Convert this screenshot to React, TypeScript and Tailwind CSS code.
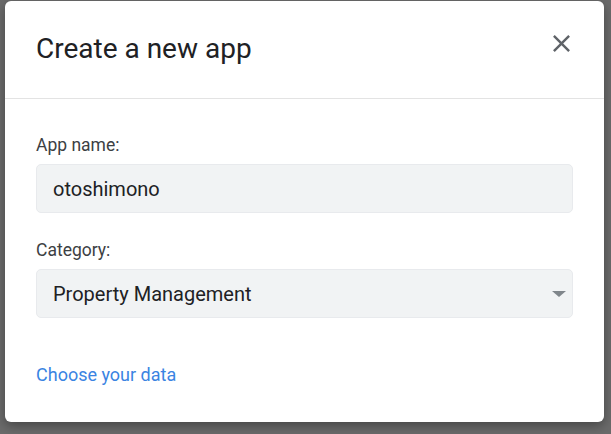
import { useState } from 'react';

const categories = ['Property Management', 'Inventory', 'Field Service', 'Sales'];

export default function App() {
  const [name, setName] = useState('otoshimono');
  const [category, setCategory] = useState(categories[0]);

  return (
    <div
      className="h-[434px] w-[611px] overflow-hidden bg-[#6b6b6b] pl-[5px] pt-[1px]"
      style={{ fontFamily: 'Roboto, "Liberation Sans", sans-serif' }}
    >
      <div className="flex h-[421px] w-[599px] flex-col rounded-[6px] bg-white shadow-[0_4px_12px_rgba(0,0,0,0.35)]">
        {/* Header */}
        <div className="flex h-[98px] shrink-0 items-start justify-between border-b border-[#e3e3e3] pl-[31px] pr-[28px]">
          <h1 className="mt-[30px] text-[28px] leading-[36px] font-normal text-[#202124]">Create a new app</h1>
          <button className="mt-[28px] text-[#5f6368]" aria-label="Close">
            <svg width="29" height="29" viewBox="0 0 24 24" fill="currentColor">
              <path d="M19 6.41L17.59 5 12 10.59 6.41 5 5 6.41 10.59 12 5 17.59 6.41 19 12 13.41 17.59 19 19 17.59 13.41 12z" />
            </svg>
          </button>
        </div>

        {/* Form */}
        <div className="flex flex-col px-[31px] pt-[34px]">
          <label className="mb-[7px] text-[17.5px] leading-[24px] text-[#3c4043]">App name:</label>
          <input
            value={name}
            onChange={(e) => setName(e.target.value)}
            className="h-[49px] w-full rounded-[5px] border border-[#e8eaed] bg-[#f1f3f4] px-[16px] text-[20px] text-[#202124] outline-none"
          />

          <label className="mt-[25px] mb-[7px] text-[17.5px] leading-[24px] text-[#3c4043]">Category:</label>
          <div className="relative">
            <select
              value={category}
              onChange={(e) => setCategory(e.target.value)}
              className="h-[49px] w-full appearance-none rounded-[5px] border border-[#e8eaed] bg-[#f1f3f4] px-[16px] text-[20px] text-[#202124] outline-none"
            >
              {categories.map((c) => (
                <option key={c}>{c}</option>
              ))}
            </select>
            <svg
              className="pointer-events-none absolute right-[7px] top-[22px]"
              width="14"
              height="6"
              viewBox="0 0 14 6"
            >
              <path d="M0 0h14L7 6z" fill="#80868b" />
            </svg>
          </div>

          <a href="#" className="mt-[45px] text-[18px] leading-[24px] text-[#3a84e2]">
            Choose your data
          </a>
        </div>
      </div>
    </div>
  );
}
